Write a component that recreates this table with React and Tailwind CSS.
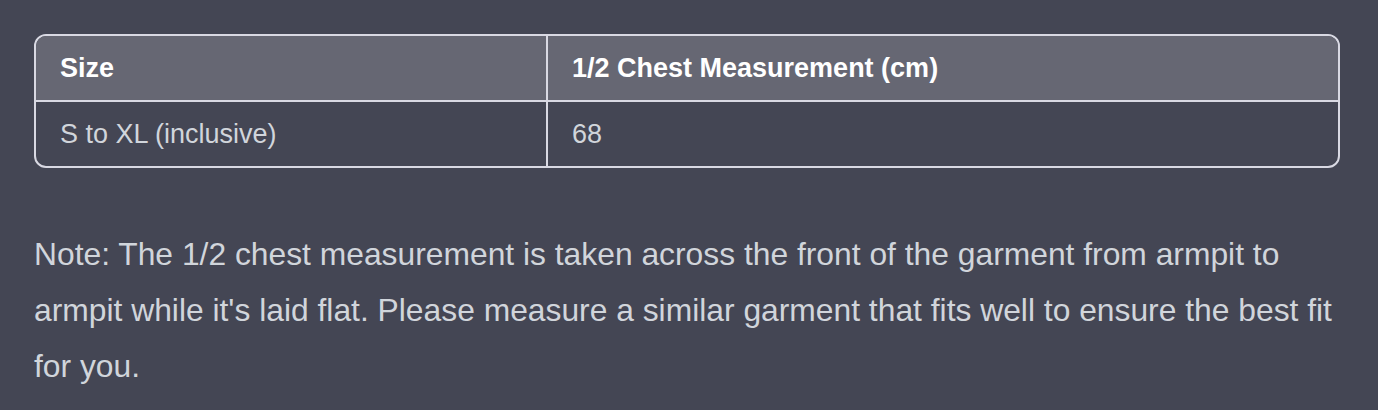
export default function App() {
  return (
    <div className="min-h-[410px] w-[1378px] bg-[#444654] px-[34px] pt-[34px] pb-4 font-['Liberation_Sans',Arial,sans-serif]">
      <div className="w-[1306px] overflow-hidden rounded-[12px] border-2 border-[#d9d9e3]">
        <table className="w-full border-collapse text-left text-[27px]">
          <thead>
            <tr className="h-[65px] bg-[#666773]">
              <th className="w-[511px] border-r-2 border-b-2 border-[#d9d9e3] px-6 font-bold text-white">Size</th>
              <th className="border-b-2 border-[#d9d9e3] px-6 font-bold text-white">1/2 Chest Measurement (cm)</th>
            </tr>
          </thead>
          <tbody>
            <tr className="h-[65px]">
              <td className="border-r-2 border-[#d9d9e3] px-6 text-[#d1d5db]">S to XL (inclusive)</td>
              <td className="px-6 text-[#d1d5db]">68</td>
            </tr>
          </tbody>
        </table>
      </div>
      <p className="mt-[58px] w-[1320px] text-[31.8px] leading-[56px] text-[#d1d5db]">
        <span className="block whitespace-nowrap">Note: The 1/2 chest measurement is taken across the front of the garment from armpit to</span>
        <span className="block whitespace-nowrap">armpit while it's laid flat. Please measure a similar garment that fits well to ensure the best fit</span>
        <span className="block whitespace-nowrap">for you.</span>
      </p>
    </div>
  );
}
